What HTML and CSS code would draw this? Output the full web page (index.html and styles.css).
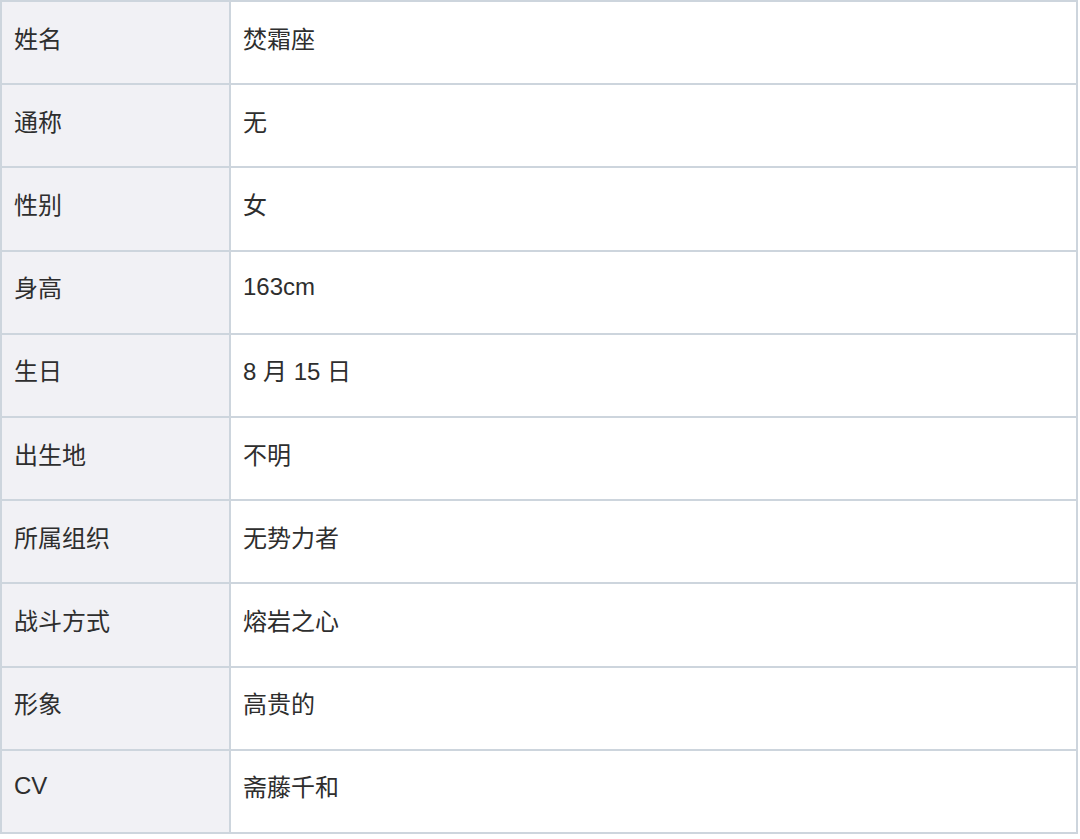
FILE: index.html
```html
<!DOCTYPE html>
<html lang="zh">
<head>
<meta charset="utf-8">
<link rel="stylesheet" href="styles.css">
</head>
<body>
<table class="info">
<tbody>
<tr><th>姓名</th><td>焚霜座</td></tr>
<tr><th>通称</th><td>无</td></tr>
<tr><th>性别</th><td>女</td></tr>
<tr><th>身高</th><td>163cm</td></tr>
<tr><th>生日</th><td>8 月 15 日</td></tr>
<tr><th>出生地</th><td>不明</td></tr>
<tr><th>所属组织</th><td>无势力者</td></tr>
<tr><th>战斗方式</th><td>熔岩之心</td></tr>
<tr><th>形象</th><td>高贵的</td></tr>
<tr><th>CV</th><td>斋藤千和</td></tr>
</tbody>
</table>
</body>
</html>
```

FILE: styles.css
```css
html, body {
  margin: 0;
  padding: 0;
  background: #ffffff;
}
.info {
  border-collapse: collapse;
  width: 1078px;
  font-family: "Liberation Sans", "Noto Sans CJK SC", sans-serif;
  font-size: 24px;
  color: #2e2e2e;
}
.info th,
.info td {
  border: 2px solid #cdd5dd;
  height: 83.2px;
  box-sizing: border-box;
  padding: 0 12px 11px 12px;
  text-align: left;
  vertical-align: middle;
  font-weight: normal;
}
.info th {
  width: 229px;
  background: #f1f1f5;
}
.info td {
  background: #ffffff;
}
```
